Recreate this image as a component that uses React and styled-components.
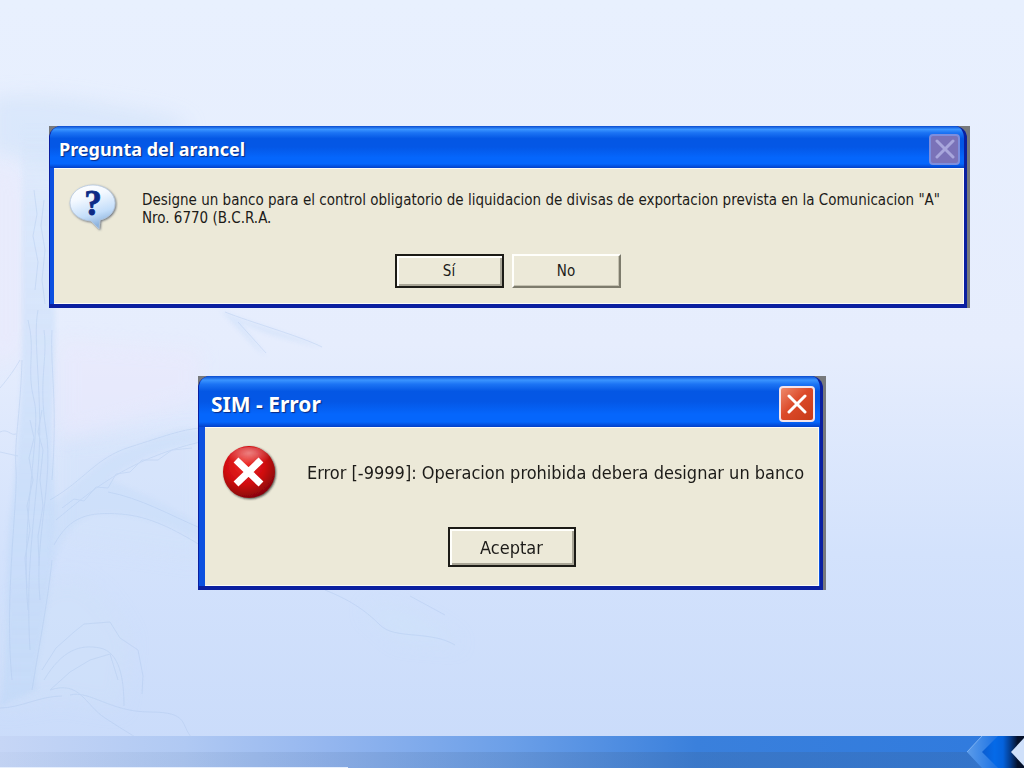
import React from 'react'
import styled, { createGlobalStyle, css } from 'styled-components';

const GlobalStyle = createGlobalStyle`
  * {
    box-sizing: border-box;
  }

  body {
    margin: 0;
    font-family: "DejaVu Sans Condensed", "Noto Sans", sans-serif;
  }
`;

function Tree() {
  return (
    <Backdrop viewBox="0 0 1024 768" preserveAspectRatio="none" aria-hidden="true">
      <defs>
        <linearGradient id="trunk" x1="0" y1="0" x2="0" y2="1">
          <stop offset="0" stopColor="#cfe2fa" stopOpacity="0" />
          <stop offset="0.15" stopColor="#cfe2fa" stopOpacity="0.8" />
          <stop offset="0.6" stopColor="#c6dcf9" />
          <stop offset="1" stopColor="#bfd7f7" stopOpacity="0.8" />
        </linearGradient>
        <filter id="soft" x="-20%" y="-40%" width="140%" height="180%">
          <feGaussianBlur stdDeviation="9" />
        </filter>
        <filter id="edge" x="-20%" y="-20%" width="140%" height="140%">
          <feGaussianBlur stdDeviation="2" />
        </filter>
      </defs>
      <g filter="url(#soft)" fill="#cfe2fa">
        <path d="M-10 98 C40 90 80 100 130 108 S180 118 190 128 L60 170 L-10 150Z" opacity="0.55" />
        <path d="M0 610 L40 590 C80 560 110 600 130 640 L120 710 L60 700 L0 710Z" opacity="0.5" />
        <path d="M365 610 C390 600 430 620 460 645 L400 640Z" opacity="0.6" />
        <path d="M60 440 L200 430 L200 560 L60 540Z" opacity="0.4" />
      </g>
      <g filter="url(#soft)" fill="#ebe8fc" opacity="0.5">
        <path d="M-10 165 C10 155 22 170 22 190 V350 L-10 370Z" />
        <path d="M60 340 L200 350 V400 L60 440Z" />
      </g>
      <g filter="url(#edge)" fill="url(#trunk)" opacity="0.65">
        <path d="M22 120 L50 120 C54 250 58 330 52 420 C50 470 60 490 52 560 C48 620 34 660 36 690 L0 706 C12 640 2 560 12 500 C20 440 22 380 22 320Z" />
      </g>
      <g filter="url(#edge)" fill="#c6dcf9" opacity="0.4">
        <path d="M50 505 C80 485 100 455 140 445 C165 432 185 428 200 430 L200 442 C160 448 130 462 108 480 C140 492 180 510 205 530 L205 545 C170 522 130 512 95 514 C70 520 60 545 52 570Z" />
        <path d="M220 310 C240 320 290 334 322 347 C285 340 258 332 240 322 L266 356 C250 345 238 328 220 310Z" />
      </g>
      <g fill="none" stroke="#a9c3ea" strokeWidth="1" opacity="0.35">
        <path d="M22 360 C20 420 14 440 16 470 S4 600 12 680" />
        <path d="M52 330 C50 370 58 400 52 480 M52 560 C48 600 40 640 32 690" />
        <path d="M28 320 C36 350 26 370 34 400 S20 520 28 610 M38 310 C32 340 44 400 38 470 S26 580 30 650" />
        <path d="M44 330 C48 360 38 380 46 430 S34 540 40 600" />
        <path d="M30 420 l4 18 l-5 20 l4 22 l-6 26 l3 24 l-5 28 l2 30 M42 410 l-4 22 l5 18 l-3 30 l3 26 l-5 30 l1 30" />
        <path d="M34 190 l3 24 l-4 22 l5 26 l-3 28 M44 200 l-3 26 l4 24 l-3 30 l3 24" />
        <path d="M50 500 C85 480 95 458 130 447 S180 430 200 428 M56 520 C90 492 125 460 200 442" />
        <path d="M54 545 C70 515 90 512 120 514 S175 530 200 545 M108 492 C140 498 170 515 200 528" />
        <path d="M62 508 l12 -9 l10 2 l12 -14 l12 1 l8 -14 l14 -2 l12 -12 l16 0 l14 -10 l20 -2" />
        <path d="M42 670 L56 648 L74 632 L84 624 L110 622 L120 638 L138 650 L143 676 L142 694" />
        <path d="M44 680 C62 650 80 644 100 648 S124 680 124 706 M50 690 L70 672 L90 660 L110 654 L118 680" />
        <path d="M50 690 C80 680 85 705 105 718 S140 740 160 752 M70 695 C90 690 110 712 150 712 S180 725 192 738" />
        <path d="M0 708 C20 708 40 696 62 696" />
        <path d="M225 312 C250 322 300 336 322 347 M238 322 L266 353" />
        <path d="M325 590 C350 600 365 610 380 625 S430 630 455 645 M410 596 L445 615" />
        <path d="M0 388 C10 376 14 370 20 360 M0 432 C8 428 10 436 16 434 M0 452 L18 456" />
      </g>
    </Backdrop>
  );
}

function QuestionIcon() {
  return (
    <svg width="50" height="50" viewBox="0 0 50 50" aria-hidden="true">
      <defs>
        <linearGradient id="bubble" x1="0" y1="0" x2="0.3" y2="1">
          <stop offset="0" stopColor="#ffffff" />
          <stop offset="0.35" stopColor="#f4f9ff" />
          <stop offset="0.75" stopColor="#c4defa" />
          <stop offset="1" stopColor="#8fb4de" />
        </linearGradient>
        <filter id="bubbleShadow" x="-20%" y="-20%" width="150%" height="150%">
          <feDropShadow dx="1" dy="1" stdDeviation="1" floodColor="#4a5563" floodOpacity="0.8" />
        </filter>
      </defs>
      <path
        d="M25 2 C37 2 47 10 47 20 C47 29 41 35 32 37 L31 46 L23 38 C10 37 2 29 2 20 C2 10 12 2 25 2Z"
        fill="url(#bubble)"
        stroke="#b5c8e0"
        strokeWidth="0.8"
        filter="url(#bubbleShadow)"
      />
      <text x="25" y="32" textAnchor="middle" fontFamily="Liberation Serif, serif" fontWeight="700" fontSize="35" fill="#0c2a86" stroke="#0c2a86" strokeWidth="0.8">?</text>
    </svg>
  );
}

function ErrorIcon() {
  return (
    <svg width="58" height="58" viewBox="0 0 58 58" aria-hidden="true">
      <defs>
        <radialGradient id="ball" cx="0.42" cy="0.35" r="0.7">
          <stop offset="0" stopColor="#ee2a24" />
          <stop offset="0.55" stopColor="#d00c10" />
          <stop offset="1" stopColor="#7c0408" />
        </radialGradient>
        <radialGradient id="shine" cx="0.5" cy="0.3" r="0.6">
          <stop offset="0" stopColor="#fff" stopOpacity="0.45" />
          <stop offset="1" stopColor="#fff" stopOpacity="0" />
        </radialGradient>
        <filter id="ballShadow" x="-20%" y="-20%" width="150%" height="150%">
          <feDropShadow dx="1" dy="1" stdDeviation="1" floodColor="#222" floodOpacity="0.8" />
        </filter>
      </defs>
      <circle cx="28" cy="28" r="26" fill="url(#ball)" filter="url(#ballShadow)" />
      <ellipse cx="28" cy="13" rx="20" ry="10" fill="url(#shine)" />
      <path d="M15 16 L40 40 M40 16 L15 40" stroke="#fff" strokeWidth="7" />
    </svg>
  );
}

function Chevrons() {
  return (
    <svg width="60" height="32" viewBox="0 0 60 32" aria-hidden="true">
      <defs>
        <linearGradient id="outer" x1="0" y1="0" x2="1" y2="0">
          <stop offset="0" stopColor="#5c9cea" />
          <stop offset="0.5" stopColor="#1f74e4" />
        </linearGradient>
        <linearGradient id="inner" x1="0" y1="0" x2="1" y2="0">
          <stop offset="0" stopColor="#0a5cd0" />
          <stop offset="0.3" stopColor="#056ae8" />
          <stop offset="0.5" stopColor="#0562dc" />
          <stop offset="0.68" stopColor="#053c8c" />
          <stop offset="0.85" stopColor="#04102a" />
        </linearGradient>
      </defs>
      <path d="M18 0 L3 16 L18 32 H60 V0Z" fill="url(#outer)" />
      <path d="M18 0 L3 16" fill="none" stroke="#7db2f2" strokeWidth="1" />
      <path d="M34 0 L18 16 L34 32 H60 V0Z" fill="url(#inner)" />
      <path d="M60 2 L47 16 L60 30Z" fill="#cfe0fa" />
    </svg>
  );
}

function Dialog({ title, titleId, large, closeDisabled, icon, message, children }) {
  return (
    <Frame $large={large} role="dialog" aria-labelledby={titleId}>
      <Window $large={large}>
        <TitleBar $large={large}>
          <Title id={titleId} $large={large}>{title}</Title>
          <CloseButton $large={large} disabled={closeDisabled} aria-label="Cerrar">
            <svg width="20" height="20" viewBox="0 0 20 20" aria-hidden="true">
              <path d="M2 2 L18 18 M18 2 L2 18" stroke="currentColor" strokeWidth="3" strokeLinecap="round" />
            </svg>
          </CloseButton>
        </TitleBar>
        <Body $large={large}>
          <Content $large={large}>
            {icon}
            <Message $large={large}>{message}</Message>
          </Content>
          <Actions>{children}</Actions>
        </Body>
      </Window>
    </Frame>
  );
}

function App() {
  return (
    <Slide>
      <GlobalStyle />
      <Tree />
      <Main>
        <Dialog
          title="Pregunta del arancel"
          titleId="pregunta"
          closeDisabled
          icon={<QuestionIcon />}
          message={'Designe un banco para el control obligatorio de liquidacion de divisas de exportacion prevista en la Comunicacion "A" Nro. 6770 (B.C.R.A.'}
        >
          <PushButton $primary>Sí</PushButton>
          <PushButton>No</PushButton>
        </Dialog>
        <Dialog
          title="SIM - Error"
          titleId="error"
          large
          icon={<ErrorIcon />}
          message="Error [-9999]: Operacion prohibida debera designar un banco"
        >
          <PushButton $primary $large>Aceptar</PushButton>
        </Dialog>
      </Main>
      <Footer>
        <Chevrons />
      </Footer>
    </Slide>
  )
}

const Slide = styled.div`
  position: relative;
  display: flex;
  flex-direction: column;
  min-height: 100vh;
  background: linear-gradient(#e8f0fe 0%, #e6edfd 45%, #d3e2fc 72%, #c9dbfa 100%);
`;

const Backdrop = styled.svg`
  position: absolute;
  inset: 0;
  width: 100%;
  height: 100%;
`;

const Main = styled.main`
  position: relative;
  flex: 1;
  display: flex;
  flex-direction: column;
  gap: 68px;
  padding: 126px 0 40px;
`;

const Frame = styled.section`
  background: #77797c;
  padding-right: 3px;
  margin: 0 54px 0 49px;

  ${({ $large }) => $large && css`
    align-self: center;
    width: 100%;
    max-width: 628px;
    margin: 0;
  `}
`;

const Window = styled.div`
  border-radius: 12px 12px 0 0;
  border: solid #0a1fa0;
  border-width: 0 3px 4px 1px;
  background: #0b50e0;
  padding: ${({ $large }) => ($large ? '0 1px 0 6px' : '0 0 0 4px')};
  overflow: hidden;
`;

const TitleBar = styled.header`
  display: flex;
  align-items: center;
  justify-content: space-between;
  height: ${({ $large }) => ($large ? '51px' : '42px')};
  margin: ${({ $large }) => ($large ? '0 -1px 0 -6px' : '0 0 0 -4px')};
  padding: ${({ $large }) => ($large ? '5px 5px 0 12px' : '4px 4px 0 9px')};
  background: linear-gradient(#0a4bd0 0%, #3a94ff 8%, #1c74f4 16%, #0457e4 30%, #0457e6 50%, #0566fc 75%, #0566fc 90%, #0340c8 100%);
`;

const Title = styled.h1`
  margin: 0;
  color: #fff;
  font-family: "Noto Sans", sans-serif;
  font-size: ${({ $large }) => ($large ? '21px' : '18px')};
  font-weight: 700;
  line-height: 24px;
  text-shadow: 1px 1px 1px #0a2a80;
`;

const CloseButton = styled.button`
  display: flex;
  align-items: center;
  justify-content: center;
  width: ${({ $large }) => ($large ? '36px' : '31px')};
  height: ${({ $large }) => ($large ? '36px' : '31px')};
  padding: 0;
  border: 2px solid #f4e4ea;
  border-radius: 4px;
  color: #fff;
  background: linear-gradient(135deg, #ee8a6c, #dc4a2a 45%, #c63a18);

  &:disabled {
    color: #a8a6dc;
    border-color: #7c8ede;
    background: #7a72b8;
  }
`;

const Body = styled.div`
  display: flex;
  flex-direction: column;
  gap: ${({ $large }) => ($large ? '25px' : '21px')};
  padding: ${({ $large }) => ($large ? '16px 12px 18px 16px' : '14px 12px 15px 14px')};
  border: solid #fbfbf8;
  border-width: 1px 1px 1px 0;
  background: #ece9d8;
`;

const Content = styled.div`
  display: flex;
  align-items: ${({ $large }) => ($large ? 'center' : 'flex-start')};
  gap: ${({ $large }) => ($large ? '28px' : '24px')};

  svg {
    flex: none;
  }
`;

const Message = styled.p`
  margin: ${({ $large }) => ($large ? '0' : '8px 0 0')};
  color: #1c1b18;
  font-size: ${({ $large }) => ($large ? '18px' : '15px')};
  line-height: 18px;
`;

const Actions = styled.div`
  display: flex;
  justify-content: center;
  gap: 8px;
  padding-right: 4px;
`;

const PushButton = styled.button`
  width: ${({ $large }) => ($large ? '128px' : '109px')};
  height: ${({ $large }) => ($large ? '40px' : '34px')};
  padding: 0;
  border: 2px solid;
  border-color: #fffffb #7d7b6c #7d7b6c #fffffb;
  background: #ece9d8;
  color: #1c1b18;
  font-family: inherit;
  font-size: ${({ $large }) => ($large ? '18px' : '15px')};
  box-shadow: inset -1px -1px 0 #c4c1b0;

  ${({ $primary }) => $primary && css`
    border-color: #1c1b16;
    box-shadow: inset 2px 2px 0 #fffffb, inset -2px -2px 0 #a9a697;
  `}
`;

const Footer = styled.footer`
  position: relative;
  display: flex;
  justify-content: flex-end;
  height: 32px;
  background:
    linear-gradient(#e6effd, #e6effd) left bottom / 34% 1px no-repeat,
    linear-gradient(90deg, rgba(60, 90, 130, 0.03), rgba(60, 90, 130, 0.22) 70%) left bottom / 100% 16px no-repeat,
    linear-gradient(90deg, #c6d6f6 0%, #b0c9f3 18%, #94b6ef 32%, #6b9fe8 50%, #3a80dc 68%, #2f7ade 100%);
`;

export default App
